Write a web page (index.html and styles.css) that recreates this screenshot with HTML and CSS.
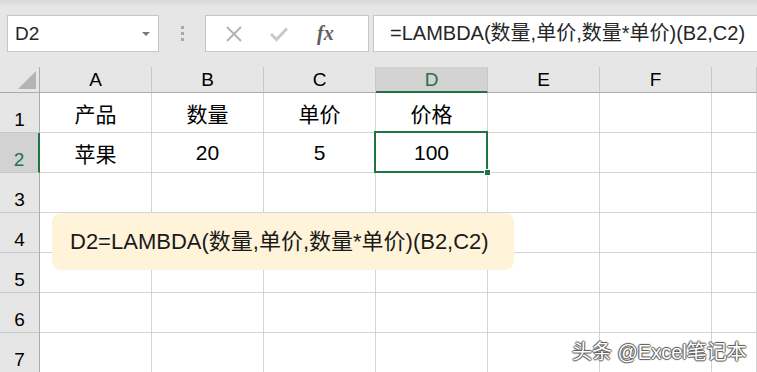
FILE: index.html
```html
<!DOCTYPE html>
<html lang="zh-CN">
<head>
    <meta charset="UTF-8">
    <title>LAMBDA</title>
    <link rel="stylesheet" href="styles.css">
</head>
<body>
    <div class="app">
        <div class="toolbar">
            <div class="name-box">
                <span>D2</span>
                <span class="caret"></span>
            </div>
            <div class="grip">
                <span></span><span></span><span></span>
            </div>
            <div class="fx-box">
                <svg class="icon" width="18" height="18" viewBox="0 0 18 18">
                    <path d="M2 2 L16 16 M16 2 L2 16" stroke="#b4b4b4" stroke-width="2" fill="none"/>
                </svg>
                <svg class="icon" width="18" height="18" viewBox="0 0 18 18">
                    <path d="M1 9 L6.5 14.5 L17 3.5" stroke="#c8c8c8" stroke-width="3" fill="none"/>
                </svg>
                <span class="fx">fx</span>
            </div>
            <div class="formula-box">=LAMBDA(数量,单价,数量*单价)(B2,C2)</div>
        </div>

        <div class="sheet">
            <div class="corner"><span class="corner-tri"></span></div>
            <div class="col-head">A</div>
            <div class="col-head">B</div>
            <div class="col-head">C</div>
            <div class="col-head active">D</div>
            <div class="col-head">E</div>
            <div class="col-head">F</div>
            <div class="col-head"></div>

            <div class="row-head">1</div>
            <div class="cell">产品</div>
            <div class="cell">数量</div>
            <div class="cell">单价</div>
            <div class="cell">价格</div>
            <div class="cell"></div>
            <div class="cell"></div>
            <div class="cell"></div>

            <div class="row-head active">2</div>
            <div class="cell">苹果</div>
            <div class="cell">20</div>
            <div class="cell">5</div>
            <div class="cell selected">100<span class="handle"></span></div>
            <div class="cell"></div>
            <div class="cell"></div>
            <div class="cell"></div>

            <div class="row-head">3</div>
            <div class="cell"></div><div class="cell"></div><div class="cell"></div><div class="cell"></div><div class="cell"></div><div class="cell"></div><div class="cell"></div>
            <div class="row-head">4</div>
            <div class="cell"></div><div class="cell"></div><div class="cell"></div><div class="cell"></div><div class="cell"></div><div class="cell"></div><div class="cell"></div>
            <div class="row-head">5</div>
            <div class="cell"></div><div class="cell"></div><div class="cell"></div><div class="cell"></div><div class="cell"></div><div class="cell"></div><div class="cell"></div>
            <div class="row-head">6</div>
            <div class="cell"></div><div class="cell"></div><div class="cell"></div><div class="cell"></div><div class="cell"></div><div class="cell"></div><div class="cell"></div>
            <div class="row-head">7</div>
            <div class="cell"></div><div class="cell"></div><div class="cell"></div><div class="cell"></div><div class="cell"></div><div class="cell"></div><div class="cell"></div>
        </div>

        <!-- подсказка поверх таблицы -->
        <div class="note">D2=LAMBDA(数量,单价,数量*单价)(B2,C2)</div>
        <div class="watermark">头条 @Excel笔记本</div>
    </div>
</body>
</html>
```

FILE: styles.css
```css
* {
    margin: 0;
    padding: 0;
    box-sizing: border-box;
}

body {
    width: 757px;
    height: 372px;
    overflow: hidden;
    background-color: #ffffff;
    font-family: 'Liberation Sans', 'Noto Sans CJK SC', sans-serif;
    color: #000;
}

.app {
    position: relative;
    width: 757px;
    height: 372px;
    overflow: hidden;
}

/* строка формул */
.toolbar {
    height: 67px;
    padding: 15px 0 0 7px;
    display: flex;
    align-items: flex-start;
    background: linear-gradient(#d8d8d8 0px, #e6e6e6 7px, #e6e6e6 100%);
}

.name-box {
    width: 152px;
    height: 37px;
    background-color: #fff;
    border: 1px solid #c6c6c6;
    display: flex;
    align-items: center;
    justify-content: space-between;
    padding: 0 8px 0 7px;
    font-size: 19px;
    color: #262626;
}

.caret {
    width: 0;
    height: 0;
    border-left: 4px solid transparent;
    border-right: 4px solid transparent;
    border-top: 4px solid #7a7a7a;
    margin-top: 1px;
}

.grip {
    width: 46px;
    height: 37px;
    display: flex;
    flex-direction: column;
    align-items: center;
    justify-content: center;
    gap: 3px;
}

.grip span {
    width: 3px;
    height: 3px;
    background-color: #a8a8a8;
}

.fx-box {
    width: 164px;
    height: 37px;
    background-color: #fff;
    border: 1px solid #c6c6c6;
    display: flex;
    align-items: center;
    padding-left: 19px;
    gap: 27px;
}

.fx {
    font-family: 'Liberation Serif', serif;
    font-style: italic;
    font-weight: bold;
    font-size: 20px;
    color: #5e5e5e;
    margin-left: 2px;
}

.formula-box {
    flex: 1;
    height: 37px;
    margin-left: 4px;
    background-color: #fff;
    border: 1px solid #c6c6c6;
    border-right: none;
    padding-left: 16px;
    font-size: 20px;
    line-height: 35px;
    color: #262626;
    white-space: nowrap;
}

/* таблица */
.sheet {
    display: grid;
    grid-template-columns: 40px repeat(6, 112px) 1fr;
    grid-template-rows: 26px repeat(7, 40px);
}

.corner,
.col-head,
.row-head {
    background-color: #e6e6e6;
}

.corner {
    border-right: 1px solid #ababab;
    border-bottom: 1px solid #ababab;
    position: relative;
}

.corner-tri {
    position: absolute;
    right: 3px;
    bottom: 3px;
    width: 0;
    height: 0;
    border-left: 18px solid transparent;
    border-bottom: 18px solid #b4b4b4;
}

.col-head {
    border-right: 1px solid #c8c8c8;
    border-bottom: 1px solid #ababab;
    text-align: center;
    font-size: 19px;
    line-height: 25px;
}

.col-head.active {
    background-color: #d2d2d2;
    border-bottom: 2px solid #217346;
    color: #217346;
}

.row-head {
    border-right: 1px solid #ababab;
    border-bottom: 1px solid #c8c8c8;
    text-align: center;
    font-size: 19px;
    display: flex;
    align-items: flex-end;
    justify-content: center;
    padding-bottom: 1px;
}

.row-head.active {
    background-color: #d2d2d2;
    border-right: 2px solid #217346;
    color: #217346;
}

.cell {
    border-right: 1px solid #d4d4d4;
    border-bottom: 1px solid #d4d4d4;
    display: flex;
    align-items: center;
    justify-content: center;
    font-size: 21px;
    padding-top: 1px;
}

.cell.selected {
    position: relative;
}

.cell.selected::after {
    content: '';
    position: absolute;
    left: -2px;
    top: -2px;
    right: -1px;
    bottom: -1px;
    border: 2px solid #217346;
}

.handle {
    position: absolute;
    right: -4px;
    bottom: -4px;
    width: 7px;
    height: 7px;
    background-color: #217346;
    border: 1px solid #fff;
    z-index: 2;
}

.note {
    position: absolute;
    left: 52px;
    top: 213px;
    width: 462px;
    height: 57px;
    border-radius: 9px;
    background-color: #fff4d9;
    padding-left: 18px;
    font-size: 22px;
    line-height: 57px;
    color: #1a1a1a;
    white-space: nowrap;
}

.watermark {
    position: absolute;
    left: 572px;
    top: 336px;
    font-size: 20px;
    color: #fff;
    text-shadow: 1px 0 1px #555, -1px 0 1px #555, 0 1px 1px #555, 0 -1px 1px #555;
    white-space: nowrap;
}
```
